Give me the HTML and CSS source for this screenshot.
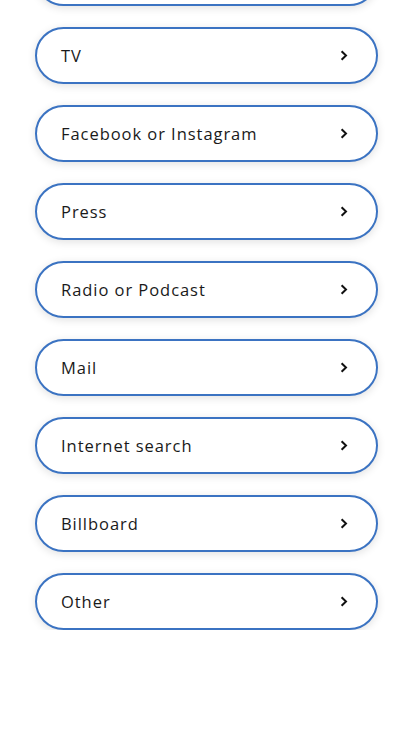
FILE: index.html
```html
<!DOCTYPE html>
<html lang="en">
<head>
<meta charset="utf-8">
<title>Source</title>
<link rel="stylesheet" href="styles.css">
</head>
<body>
<ul class="options">
  <li><button class="option"><span class="label">Word of mouth</span><svg class="chev" viewBox="0 0 8 11" width="8" height="11"><path d="M1.6 1.2 L6 5.5 L1.6 9.8" fill="none" stroke="#111" stroke-width="2"/></svg></button></li>
  <li><button class="option"><span class="label">TV</span><svg class="chev" viewBox="0 0 8 11" width="8" height="11"><path d="M1.6 1.2 L6 5.5 L1.6 9.8" fill="none" stroke="#111" stroke-width="2"/></svg></button></li>
  <li><button class="option"><span class="label">Facebook or Instagram</span><svg class="chev" viewBox="0 0 8 11" width="8" height="11"><path d="M1.6 1.2 L6 5.5 L1.6 9.8" fill="none" stroke="#111" stroke-width="2"/></svg></button></li>
  <li><button class="option"><span class="label">Press</span><svg class="chev" viewBox="0 0 8 11" width="8" height="11"><path d="M1.6 1.2 L6 5.5 L1.6 9.8" fill="none" stroke="#111" stroke-width="2"/></svg></button></li>
  <li><button class="option"><span class="label">Radio or Podcast</span><svg class="chev" viewBox="0 0 8 11" width="8" height="11"><path d="M1.6 1.2 L6 5.5 L1.6 9.8" fill="none" stroke="#111" stroke-width="2"/></svg></button></li>
  <li><button class="option"><span class="label">Mail</span><svg class="chev" viewBox="0 0 8 11" width="8" height="11"><path d="M1.6 1.2 L6 5.5 L1.6 9.8" fill="none" stroke="#111" stroke-width="2"/></svg></button></li>
  <li><button class="option"><span class="label">Internet search</span><svg class="chev" viewBox="0 0 8 11" width="8" height="11"><path d="M1.6 1.2 L6 5.5 L1.6 9.8" fill="none" stroke="#111" stroke-width="2"/></svg></button></li>
  <li><button class="option"><span class="label">Billboard</span><svg class="chev" viewBox="0 0 8 11" width="8" height="11"><path d="M1.6 1.2 L6 5.5 L1.6 9.8" fill="none" stroke="#111" stroke-width="2"/></svg></button></li>
  <li><button class="option"><span class="label">Other</span><svg class="chev" viewBox="0 0 8 11" width="8" height="11"><path d="M1.6 1.2 L6 5.5 L1.6 9.8" fill="none" stroke="#111" stroke-width="2"/></svg></button></li>
</ul>
</body>
</html>
```
FILE: styles.css
```css
html, body {
  margin: 0;
  padding: 0;
  background: #fff;
}
body {
  font-family: "Open Sans", "Liberation Sans", sans-serif;
  color: #1a1a1a;
  overflow: hidden;
}
.options {
  list-style: none;
  margin: -51px 0 0 0;
  padding: 0 36px 0 35px;
  display: flex;
  flex-direction: column;
  gap: 21px;
}
.option {
  box-sizing: border-box;
  width: 100%;
  height: 57px;
  display: flex;
  align-items: center;
  justify-content: space-between;
  padding: 0 28px 1px 24px;
  border: 2px solid #3b73c2;
  border-radius: 29px;
  background: #fff;
  box-shadow: 0 2px 8px rgba(0, 0, 0, 0.12);
  font-family: inherit;
  font-size: 16.5px;
  font-weight: 500;
  letter-spacing: 0.95px;
  color: #1a1a1a;
  text-align: left;
  cursor: pointer;
}
.chev {
  display: block;
}
```
